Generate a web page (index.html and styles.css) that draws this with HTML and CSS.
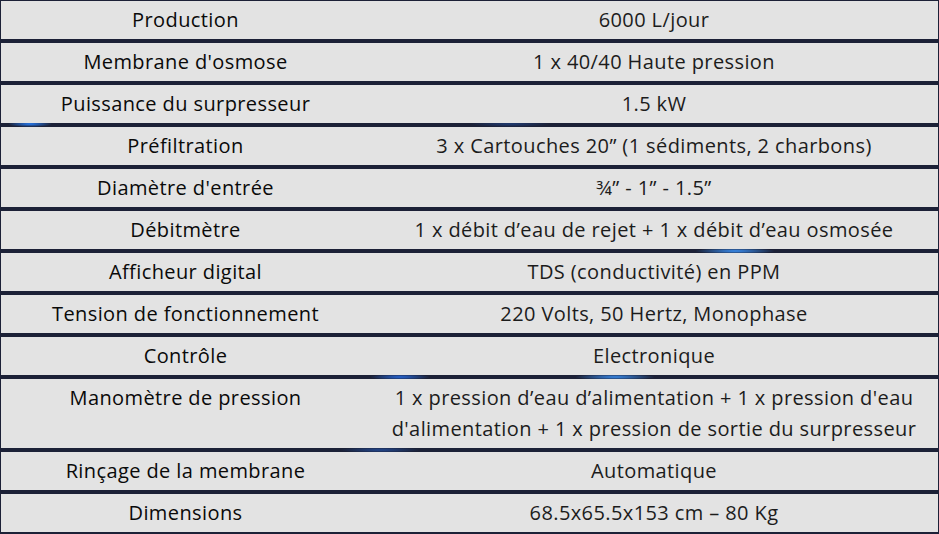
FILE: index.html
```html
<!DOCTYPE html>
<html lang="fr">
<head>
<meta charset="utf-8">
<title>Caractéristiques</title>
<link rel="stylesheet" href="styles.css">
</head>
<body>
<div class="specs">
  <div class="row"><div class="label">Production</div><div class="value">6000 L/jour</div></div>
  <div class="row"><div class="label">Membrane d'osmose</div><div class="value">1 x 40/40 Haute pression</div></div>
  <div class="row"><div class="label">Puissance du surpresseur</div><div class="value">1.5 kW</div></div>
  <div class="row"><div class="label">Préfiltration</div><div class="value">3 x Cartouches 20” (1 sédiments, 2 charbons)</div></div>
  <div class="row"><div class="label">Diamètre d'entrée</div><div class="value">¾” - 1” - 1.5”</div></div>
  <div class="row"><div class="label">Débitmètre</div><div class="value">1 x débit d’eau de rejet + 1 x débit d’eau osmosée</div></div>
  <div class="row"><div class="label">Afficheur digital</div><div class="value">TDS (conductivité) en PPM</div></div>
  <div class="row"><div class="label">Tension de fonctionnement</div><div class="value">220 Volts, 50 Hertz, Monophase</div></div>
  <div class="row"><div class="label">Contrôle</div><div class="value">Electronique</div></div>
  <div class="row"><div class="label">Manomètre de pression</div><div class="value">1 x pression d’eau d’alimentation + 1 x pression d'eau d'alimentation + 1 x pression de sortie du surpresseur</div></div>
  <div class="row"><div class="label">Rinçage de la membrane</div><div class="value">Automatique</div></div>
  <div class="row"><div class="label">Dimensions</div><div class="value">68.5x65.5x153 cm – 80 Kg</div></div>
</div>
</body>
</html>
```
FILE: styles.css
```css
html, body {
  margin: 0;
  padding: 0;
}
body {
  width: 939px;
  height: 534px;
  overflow: hidden;
  background-color: #1c2137;
  background-image:
    radial-gradient(ellipse 22px 3px at 30px 124px, rgba(40,130,255,0.95), rgba(40,130,255,0) 100%),
    radial-gradient(ellipse 40px 3px at 735px 251px, rgba(60,150,255,0.95), rgba(60,150,255,0) 100%),
    radial-gradient(ellipse 30px 3px at 400px 377px, rgba(40,120,255,0.8), rgba(40,120,255,0) 100%),
    radial-gradient(ellipse 40px 3px at 615px 377px, rgba(60,150,255,0.9), rgba(60,150,255,0) 100%),
    radial-gradient(ellipse 40px 3px at 380px 450px, rgba(40,110,230,0.5), rgba(40,110,230,0) 100%),
    radial-gradient(ellipse 40px 3px at 510px 124px, rgba(40,110,230,0.35), rgba(40,110,230,0) 100%);
  font-family: "Open Sans", "Noto Sans", sans-serif;
}
.specs {
  display: flex;
  flex-direction: column;
  gap: 4px;
  padding: 1px 1px 2px 1px;
}
.row {
  display: grid;
  grid-template-columns: 369px 1fr;
  background: #e3e3e3;
  padding: 3px 0 4px 0;
  line-height: 31px;
  font-size: 20px;
  letter-spacing: 0.4px;
}
.label {
  text-align: center;
  color: #0a0a0a;
  font-weight: 500;
}
.value {
  text-align: center;
  color: #1c1c1c;
  font-weight: 400;
  padding: 0 12px;
}
```
